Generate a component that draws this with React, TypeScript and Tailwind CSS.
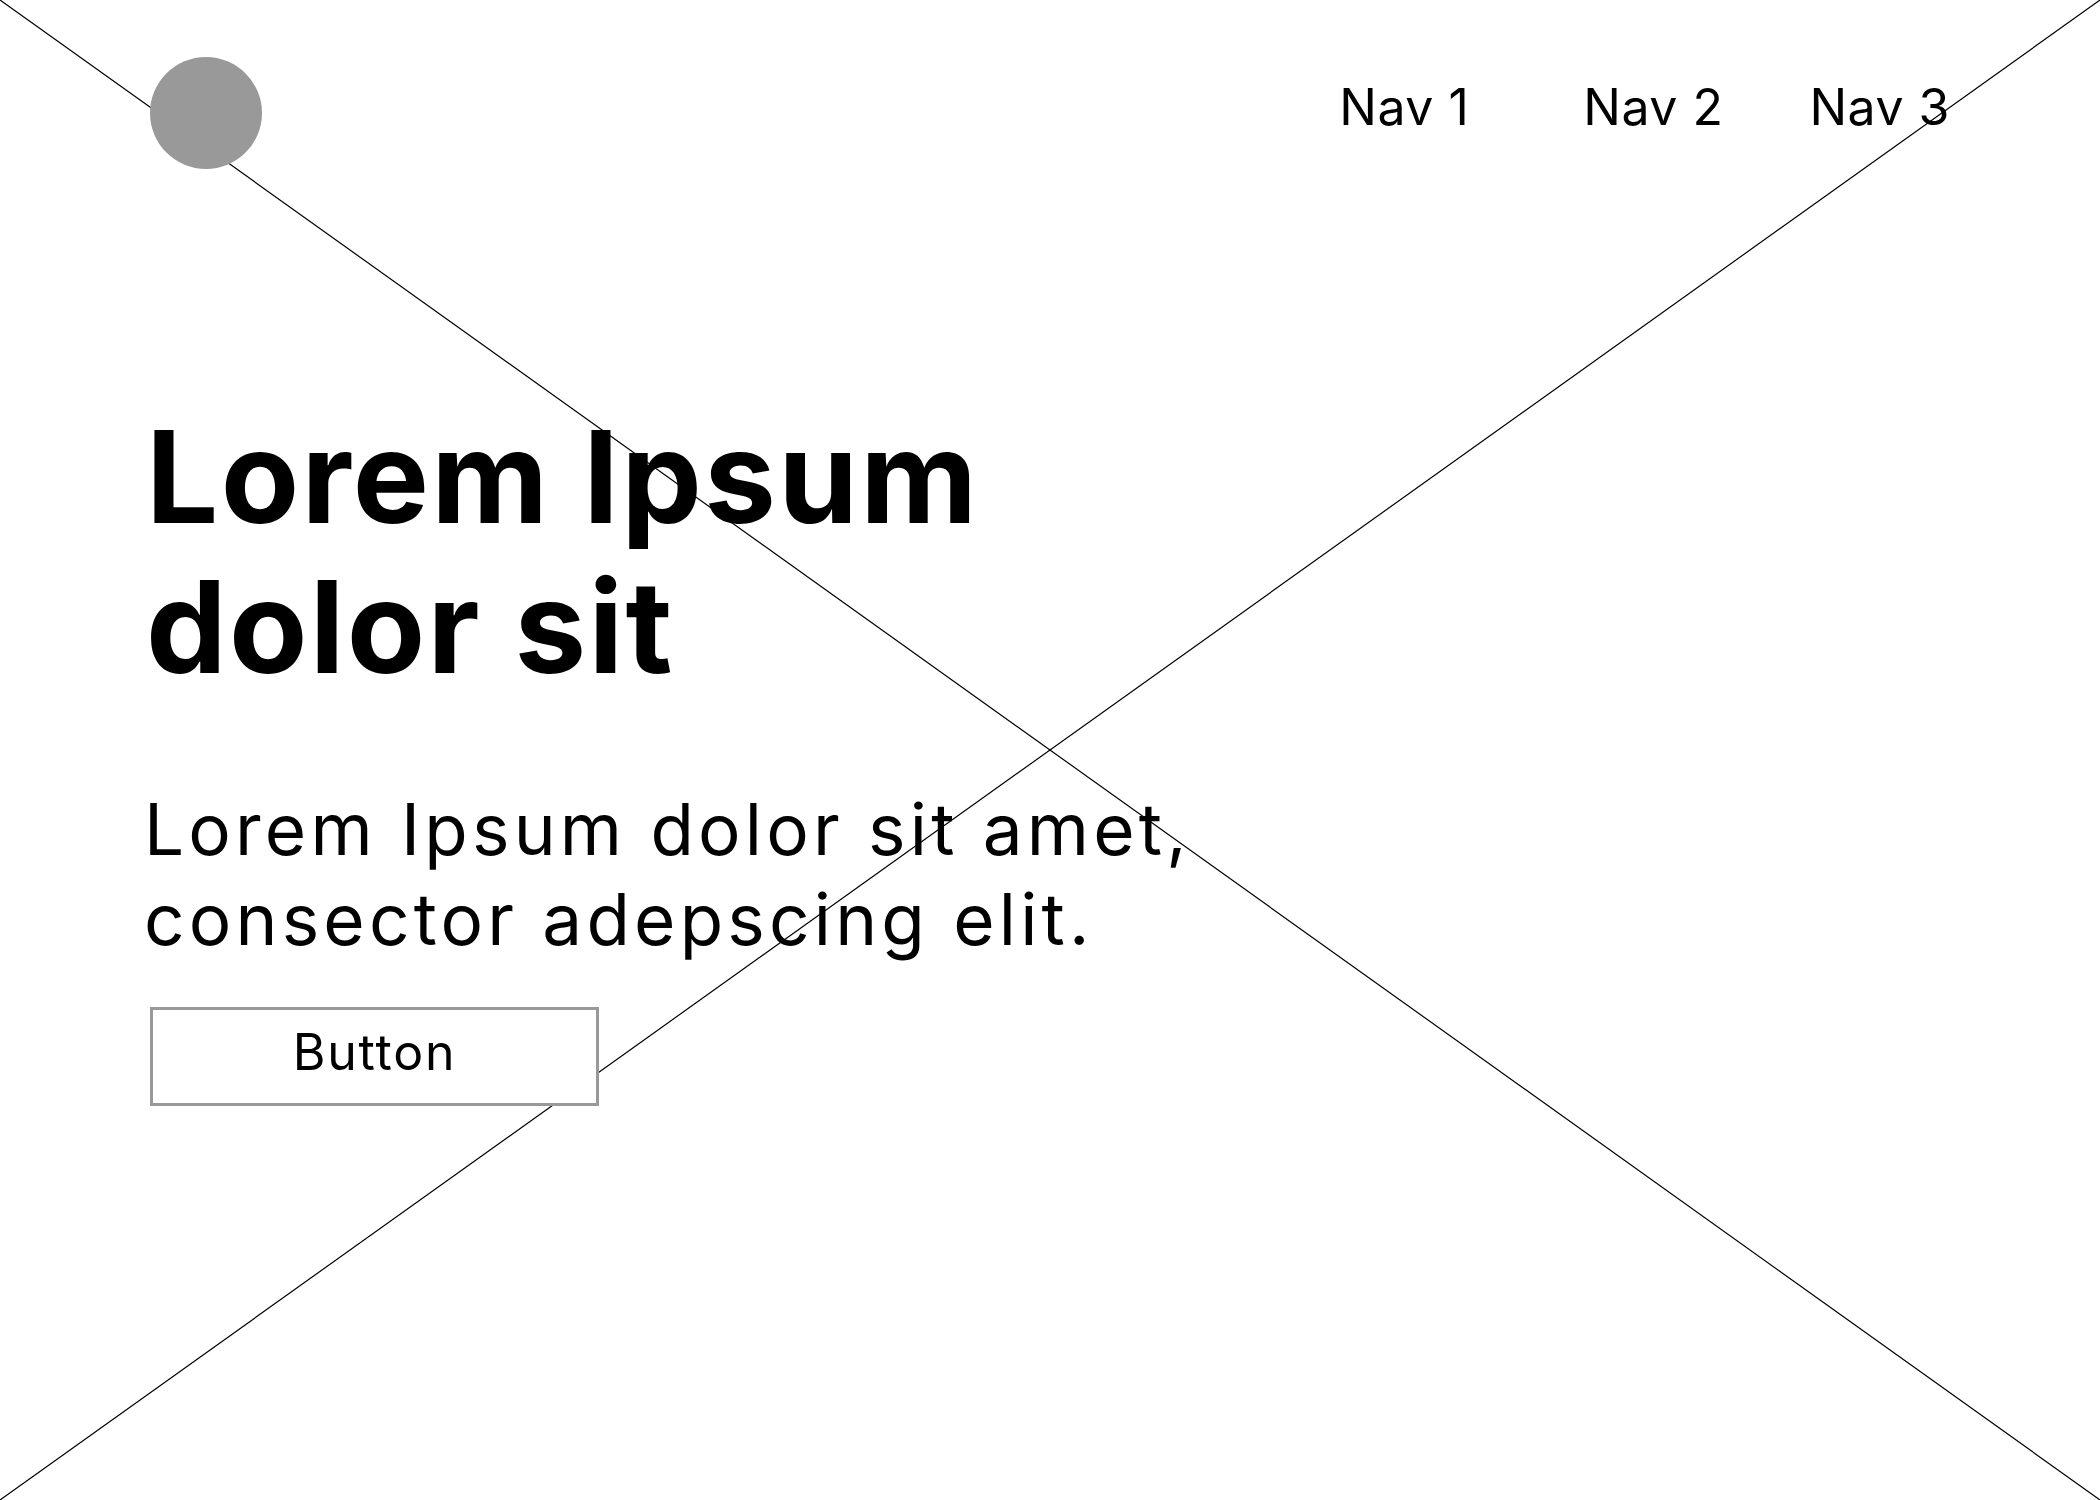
const navItems = [
  { label: "Nav 1", className: "" },
  { label: "Nav 2", className: "ml-[114px]" },
  { label: "Nav 3", className: "ml-[86px]" },
];

function PlaceholderCross() {
  return (
    <svg
      className="pointer-events-none absolute inset-0 h-full w-full"
      viewBox="0 0 2100 1500"
      preserveAspectRatio="none"
    >
      <line x1="0" y1="0" x2="2100" y2="1500" stroke="#000" strokeWidth="1.2" />
      <line x1="2100" y1="0" x2="0" y2="1500" stroke="#000" strokeWidth="1.2" />
    </svg>
  );
}

export default function App() {
  return (
    <div className="relative h-[1500px] w-full overflow-hidden bg-white font-['Inter','Liberation_Sans',sans-serif] text-black">
      <PlaceholderCross />

      <div className="relative px-[150px]">
        {/* header */}
        <header className="flex items-start justify-between pt-[57px]">
          <div className="h-[112px] w-[112px] rounded-full bg-[#999999]" />
          <nav className="mt-[20px] flex">
            {navItems.map((item) => (
              <a
                key={item.label}
                href="#"
                className={`text-[50px] leading-[60px] font-normal tracking-[0.5px] ${item.className}`}
              >
                {item.label}
              </a>
            ))}
          </nav>
        </header>

        {/* hero */}
        <section className="mt-[233px]">
          <h1 className="-ml-[4px] text-[128px] leading-[150px] font-bold tracking-[2.3px]">
            Lorem Ipsum
            <br />
            dolor sit
          </h1>
          <p className="mt-[82px] -ml-[6px] text-[71px] leading-[90px] font-normal tracking-[4.2px]">
            Lorem Ipsum dolor sit amet,
            <br />
            consector adepscing elit.
          </p>
          <button className="mt-[43px] flex h-[99px] w-[449px] items-center justify-center border-[3px] border-[#999999] bg-white pb-[10px] text-[50px] leading-none font-normal tracking-[1.8px]">
            Button
          </button>
        </section>
      </div>
    </div>
  );
}
